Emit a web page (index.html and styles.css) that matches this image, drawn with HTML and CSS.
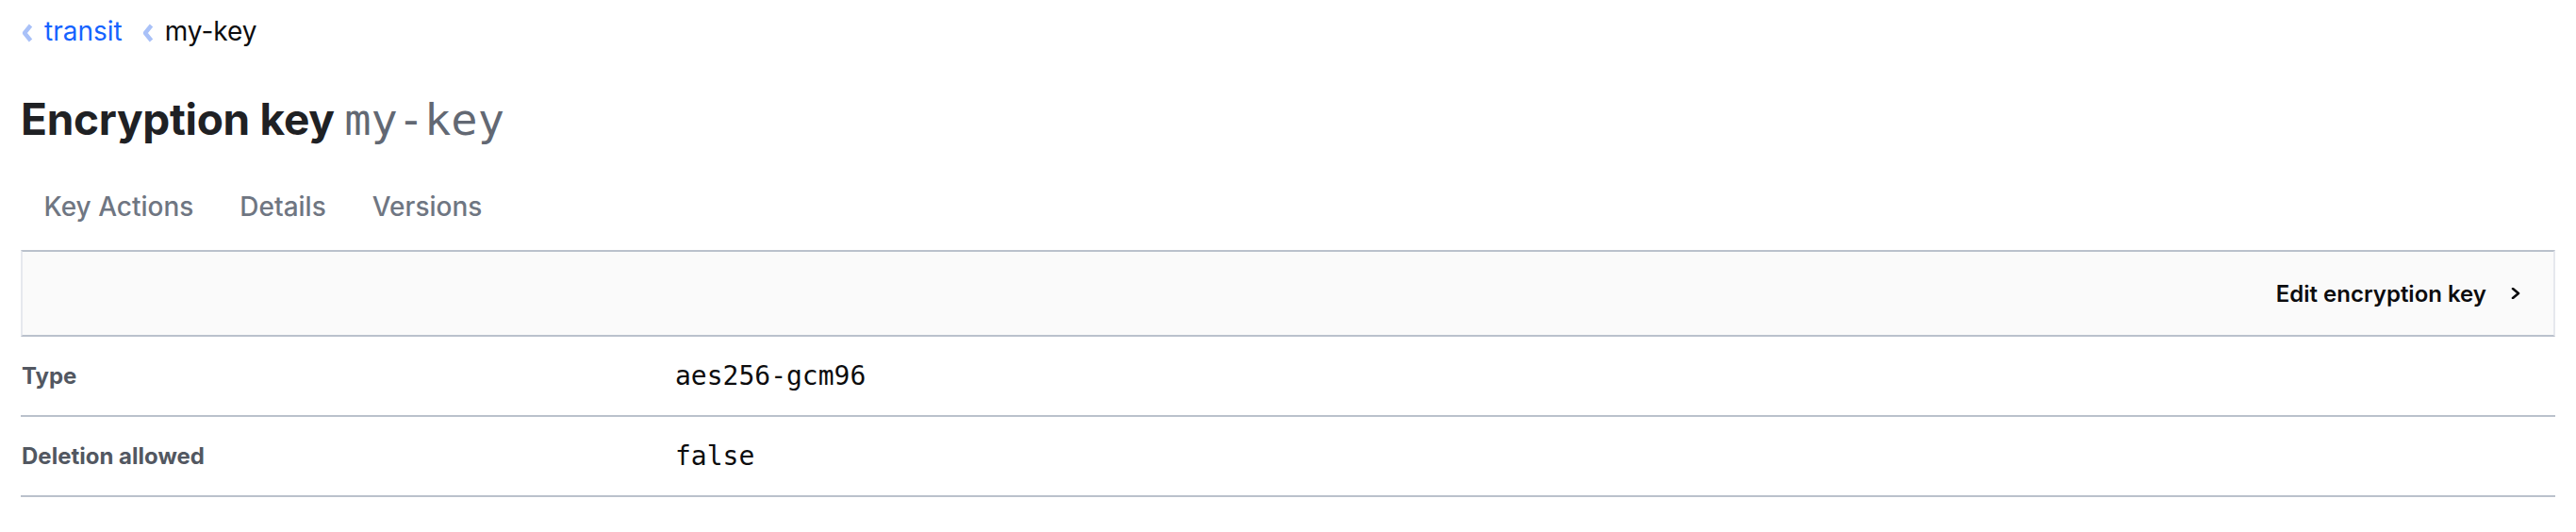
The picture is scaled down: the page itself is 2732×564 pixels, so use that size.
FILE: index.html
```html
<!DOCTYPE html>
<html lang="en">
<head>
<meta charset="utf-8">
<title>Encryption key my-key</title>
<link rel="stylesheet" href="styles.css">
</head>
<body>
<nav class="breadcrumb">
  <span class="crumb">
    <svg class="crumb-chevron" viewBox="0 0 14 20" width="14" height="20"><polyline points="10.5,2 4,10 10.5,18" fill="none" stroke="currentColor" stroke-width="4.4" stroke-linecap="butt" stroke-linejoin="round"/></svg>
    <a class="crumb-link" href="#">transit</a>
  </span>
  <span class="crumb">
    <svg class="crumb-chevron" viewBox="0 0 14 20" width="14" height="20"><polyline points="10.5,2 4,10 10.5,18" fill="none" stroke="currentColor" stroke-width="4.4" stroke-linecap="butt" stroke-linejoin="round"/></svg>
    <span class="crumb-current">my-key</span>
  </span>
</nav>

<h1 class="title">Encryption key <code class="title-mono">my-key</code></h1>

<div class="tabs">
  <a class="tab" href="#">Key Actions</a>
  <a class="tab" href="#">Details</a>
  <a class="tab" href="#">Versions</a>
</div>

<div class="toolbar">
  <a class="toolbar-link" href="#">Edit encryption key
    <svg class="toolbar-chevron" viewBox="0 0 10 12" width="10" height="12"><polyline points="2,1 8,6 2,11" fill="none" stroke="currentColor" stroke-width="2.6" stroke-linecap="round" stroke-linejoin="round"/></svg>
  </a>
</div>

<div class="info-table">
  <div class="info-row">
    <div class="info-label">Type</div>
    <div class="info-value">aes256-gcm96</div>
  </div>
  <div class="info-row">
    <div class="info-label">Deletion allowed</div>
    <div class="info-value">false</div>
  </div>
</div>
</body>
</html>
```

FILE: styles.css
```css
html, body {
  margin: 0;
  padding: 0;
  background: #ffffff;
}

body {
  padding: 0 22px;
  font-family: Inter, "Noto Sans", "Liberation Sans", sans-serif;
  color: #0c0c0e;
}

a {
  text-decoration: none;
}

.breadcrumb {
  display: flex;
  align-items: center;
  gap: 20px;
  padding-top: 16px;
  height: 34px;
  font-size: 28px;
  line-height: 34px;
}

.crumb {
  display: flex;
  align-items: center;
  gap: 11px;
}

.crumb-chevron {
  color: #a9c1f8;
  margin-top: 4px;
}

.crumb-link {
  color: #1563ff;
}

.crumb-current {
  color: #0c0c0e;
}

.title {
  margin: 48px 0 0;
  font-size: 46px;
  line-height: 56px;
  font-weight: 700;
  color: #1f2124;
  letter-spacing: -0.3px;
}

.title-mono {
  font-family: "DejaVu Sans Mono", "Liberation Mono", monospace;
  font-weight: 400;
  font-size: 47px;
  color: #626873;
  letter-spacing: 0;
}

.tabs {
  display: flex;
  margin-top: 44px;
  height: 40px;
}

.tab {
  padding: 0 24.5px;
  font-size: 28px;
  line-height: 40px;
  font-weight: 500;
  color: #6f7682;
}

.toolbar {
  margin-top: 26px;
  height: 88px;
  display: flex;
  align-items: center;
  justify-content: flex-end;
  padding-right: 35px;
  background: #fafafa;
  border-top: 2px solid #bac1cc;
  border-bottom: 2px solid #bac1cc;
  border-left: 2px solid #e6e8ee;
  border-right: 2px solid #e6e8ee;
}

.toolbar-link {
  display: flex;
  align-items: center;
  gap: 26px;
  font-size: 24px;
  font-weight: 600;
  color: #0c0c0e;
}

.toolbar-chevron {
  color: #0c0c0e;
}

.info-row {
  display: grid;
  grid-template-columns: 25% 1fr;
  align-items: center;
  height: 83px;
  border-bottom: 2px solid #bac1cc;
}

.info-label {
  padding-left: 1px;
  font-size: 24px;
  font-weight: 700;
  color: #525761;
}

.info-value {
  padding-left: 22px;
  font-family: "DejaVu Sans Mono", "Liberation Mono", monospace;
  font-size: 28px;
  color: #0c0c0e;
}
```
